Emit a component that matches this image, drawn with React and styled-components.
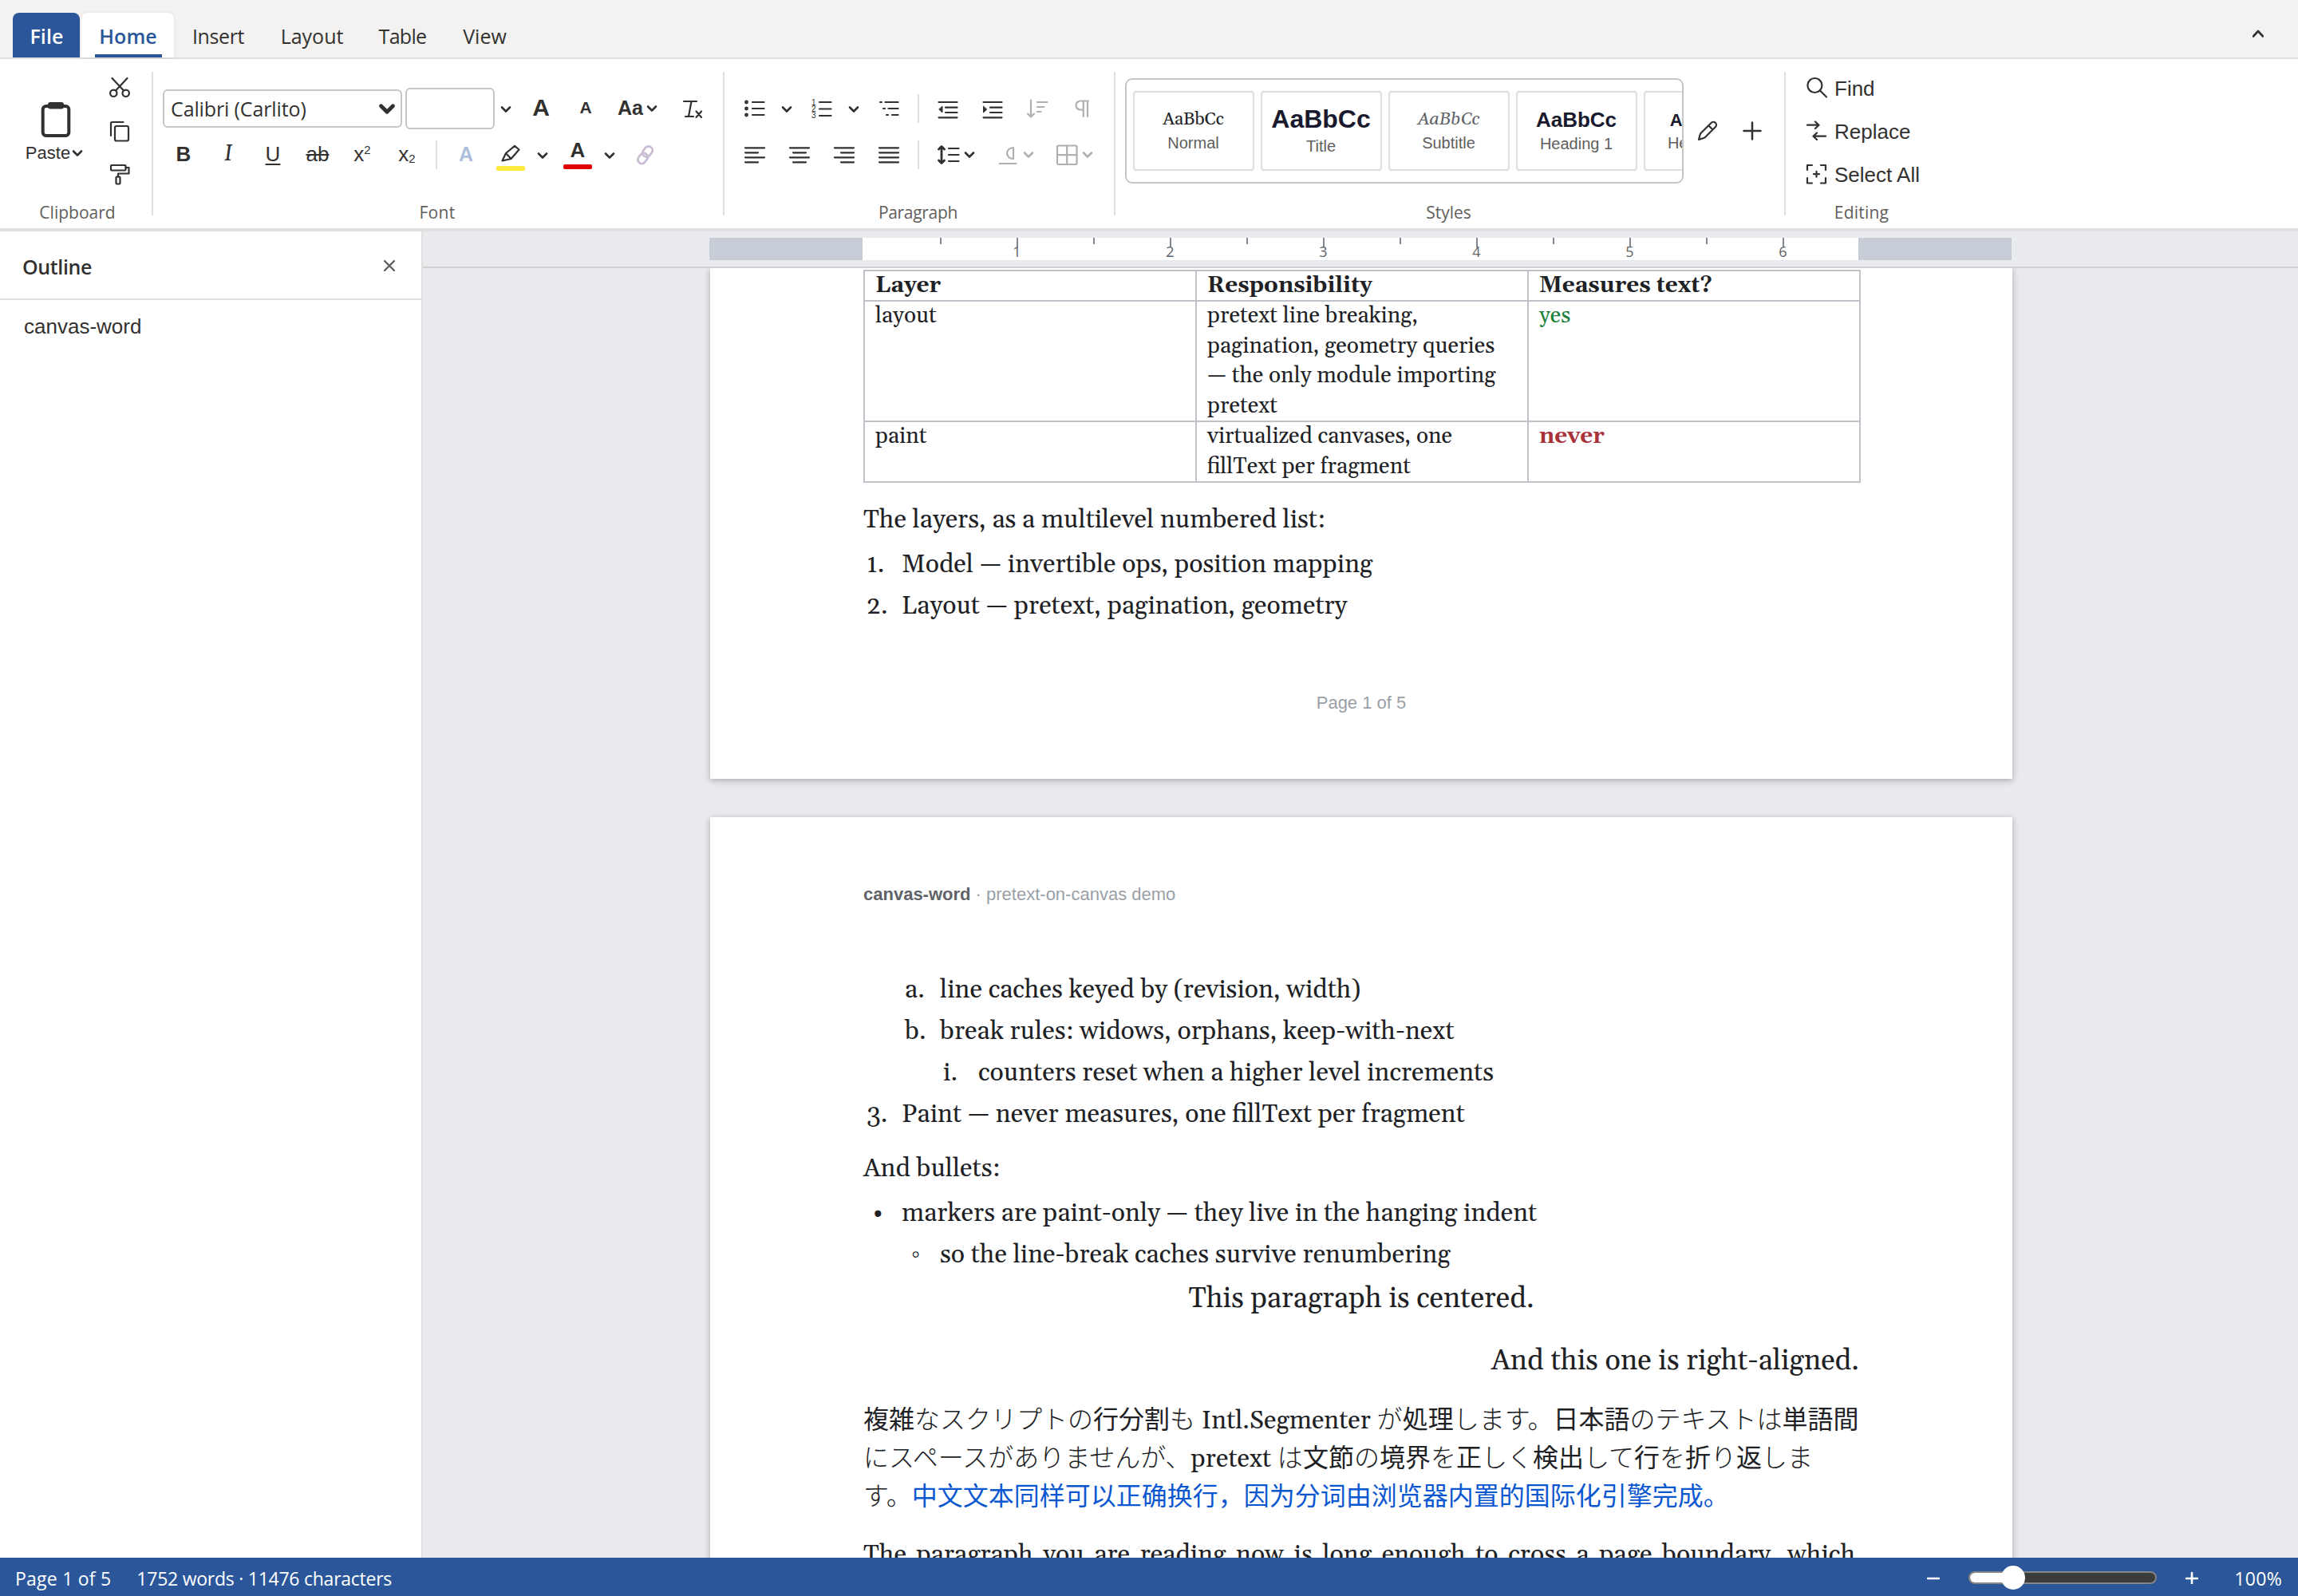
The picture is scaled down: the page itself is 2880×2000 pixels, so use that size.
import React from "react";
import styled, { createGlobalStyle } from "styled-components";

const UI = '"Open Sans", "Noto Sans", sans-serif';
const ARIAL = '"Liberation Sans", Arial, sans-serif';
const DOC = 'Gelasio, "Liberation Serif", "Noto Sans CJK JP", serif';
const INK = "#323130";
const LINE = "#e1dfdd";

const Global = createGlobalStyle`
  *, *::before, *::after { box-sizing: border-box; }
  body { margin: 0; background: #e8eaed; }
`;

const Shell = styled.div`
  display: flex;
  flex-direction: column;
  width: 2880px;
  height: 2000px;
  overflow: hidden;
  font-family: ${UI};
  font-size: 25px;
  color: ${INK};
  background: #e8eaed;
  white-space: nowrap;
`;

/* ---------- tab strip ---------- */
const TabStrip = styled.div`
  display: flex;
  align-items: flex-end;
  gap: 2px;
  height: 74px;
  padding: 0 22px 0 16px;
  background: #f3f2f1;
  border-bottom: 2px solid ${LINE};
`;
const Tab = styled.div`
  display: flex;
  flex-direction: column;
  align-items: center;
  width: ${(p) => p.$w}px;
  height: 56px;
  padding-left: ${(p) => (p.$file || p.$active ? 1 : 0)}px;
  border-radius: 8px 8px 0 0;
  line-height: 58px;
  letter-spacing: ${(p) => p.$ls || 0}px;
  color: ${(p) => (p.$file ? "#fff" : p.$active ? "#2b579a" : INK)};
  font-weight: ${(p) => (p.$file || p.$active ? 600 : 400)};
  background: ${(p) => (p.$file ? "#2b579a" : p.$active ? "#fff" : "transparent")};
  box-shadow: ${(p) => (p.$active ? "0 0 4px rgba(0,0,0,.08)" : "none")};
`;
const TabUnderline = styled.span`
  width: 84px;
  height: 4px;
  margin-top: -6px;
  background: #2b579a;
`;
const Collapse = styled.div`
  display: flex;
  justify-content: center;
  align-items: center;
  width: 56px;
  height: 60px;
  margin-left: auto;
`;

/* ---------- ribbon ---------- */
const Ribbon = styled.div`
  display: flex;
  height: 216px;
  padding-left: 4px;
  background: #fff;
  border-bottom: 4px solid #e0dfde;
`;
const Group = styled.div`
  display: flex;
  flex-direction: column;
  justify-content: space-between;
  width: ${(p) => p.$w}px;
`;
const GroupRule = styled.div`
  width: 2px;
  height: 180px;
  margin-top: 16px;
  background: ${LINE};
`;
const GroupLabel = styled.div`
  height: 35px;
  padding-right: ${(p) => p.$pr || 0}px;
  line-height: 30px;
  font-size: 21px;
  text-align: center;
  color: #605e5c;
  letter-spacing: ${(p) => p.$ls || 0}px;
`;
const ClipBody = styled.div`
  display: flex;
  padding: 9px 0 0 16px;
`;
const PasteButton = styled.div`
  display: flex;
  flex-direction: column;
  align-items: center;
  width: 100px;
  padding-top: 43px;
`;
const PasteText = styled.div`
  display: flex;
  align-items: center;
  gap: 2px;
  height: 30px;
  margin-top: 3px;
  padding-right: 4px;
  font-family: ${ARIAL};
  font-size: 22px;
`;
const SmallColumn = styled.div`
  display: flex;
  flex-direction: column;
  margin-left: 6px;
`;
const SmallButton = styled.div`
  display: flex;
  align-items: center;
  justify-content: center;
  width: 48px;
  height: 54px;
`;
const ToolRows = styled.div`
  display: flex;
  flex-direction: column;
  gap: 8px;
  padding: 34px 0 0 10px;
`;
const ToolRow = styled.div`
  display: flex;
  align-items: center;
  height: ${(p) => p.$h}px;
`;
const Tool = styled.div`
  display: flex;
  align-items: center;
  justify-content: center;
  gap: ${(p) => p.$gap || 0}px;
  width: ${(p) => p.$w || 56}px;
  height: 44px;
`;
const Drop = styled(Tool)`
  width: ${(p) => p.$w || 24}px;
  margin-right: ${(p) => (p.$flush ? 0 : 4)}px;
  padding-top: 1px;
`;
const ToolRule = styled.div`
  width: 2px;
  height: 36px;
  margin: 0 8px;
  background: ${LINE};
`;
const FontSelect = styled.div`
  display: flex;
  align-items: center;
  justify-content: space-between;
  width: 300px;
  height: 48px;
  margin: 0 4px 0 2px;
  padding: 0 6px 0 8px;
  border: 2px solid #c8c6c4;
  border-radius: 6px;
  letter-spacing: -0.12px;
`;
const SizeBox = styled.div`
  width: 112px;
  height: 52px;
  border: 2px solid #c8c6c4;
  border-radius: 6px;
`;
const Glyph = styled.span`
  font-family: ${(p) => (p.$serif ? DOC : ARIAL)};
  font-size: ${(p) => p.$s || 26}px;
  font-weight: ${(p) => p.$wt || 400};
  font-style: ${(p) => (p.$serif ? "italic" : "normal")};
  line-height: 30px;
  text-decoration: ${(p) => p.$deco || "none"};
  text-decoration-thickness: 2px;
  text-underline-offset: 3px;
  color: ${(p) => p.$c || INK};
  padding-bottom: ${(p) => p.$up || 0}px;
`;
const Small = styled.span`
  font-size: 15px;
  line-height: 1;
  vertical-align: ${(p) => (p.$sub ? "-2px" : "9px")};
`;
const SwatchTool = styled.div`
  display: flex;
  flex-direction: column;
  align-items: center;
  width: 56px;
  height: 44px;
  padding-top: ${(p) => p.$top || 0}px;
`;
const Swatch = styled.span`
  width: 36px;
  height: 6px;
  margin-top: ${(p) => p.$mt || 0}px;
  border-radius: 2px;
  background: ${(p) => p.$c};
  flex: none;
`;

/* ---------- style gallery ---------- */
const StylesBody = styled.div`
  display: flex;
  align-items: center;
  padding: 24px 0 0 12px;
`;
const Gallery = styled.div`
  display: flex;
  align-items: center;
  gap: 8px;
  width: 700px;
  height: 132px;
  margin-right: 2px;
  padding-left: 8px;
  border: 2px solid #c8c6c4;
  border-radius: 9px;
  overflow: hidden;
`;
const StyleCard = styled.div`
  display: flex;
  flex: none;
  flex-direction: column;
  align-items: center;
  justify-content: center;
  gap: 4px;
  width: 152px;
  height: 100px;
  padding: ${(p) => p.$down || 0}px 1px ${(p) => p.$up || 0}px 0;
  border: 2px solid ${LINE};
  border-radius: 4px;
`;
const Sample = styled.span`
  font-family: ${(p) => (p.$serif ? DOC : ARIAL)};
  font-size: ${(p) => p.$s}px;
  font-weight: ${(p) => (p.$serif ? 400 : 700)};
  font-style: ${(p) => (p.$italic ? "italic" : "normal")};
  line-height: 1.15;
  color: ${(p) => p.$c};
`;
const CardName = styled.span`
  font-family: ${ARIAL};
  font-size: 20px;
  line-height: 23px;
  color: #605e5c;
`;

const EditBody = styled.div`
  display: flex;
  flex-direction: column;
  padding: 9px 0 0 25px;
`;
const EditItem = styled.div`
  display: flex;
  align-items: center;
  gap: 8px;
  height: 54px;
  font-family: ${ARIAL};
  font-size: 26px;
`;
const EditText = styled.span`
  padding-top: 2px;
`;

/* ---------- workspace ---------- */
const Workspace = styled.div`
  display: flex;
  flex: 1;
  min-height: 0;
`;
const Sidebar = styled.div`
  width: 530px;
  background: #fff;
  border-right: 2px solid ${LINE};
`;
const SideHead = styled.div`
  display: flex;
  align-items: center;
  justify-content: space-between;
  height: 86px;
  padding: 3px 31px 0 28px;
  border-bottom: 2px solid ${LINE};
  font-weight: 600;
  letter-spacing: -0.38px;
`;
const SideItem = styled.div`
  padding: 0 30px;
  line-height: 66px;
  font-family: ${ARIAL};
  font-size: 26px;
`;
const Stage = styled.div`
  display: flex;
  flex-direction: column;
  flex: 1;
  min-width: 0;
`;
const RulerBar = styled.div`
  display: flex;
  flex: none;
  justify-content: center;
  height: 46px;
  padding-top: 8px;
  border-bottom: 2px solid #cfcfd0;
`;
const RulerMargin = styled.div`
  width: 192px;
  height: 28px;
  background: #c6cdd7;
`;
const RulerScale = styled.div`
  display: flex;
  justify-content: center;
  width: 1248px;
  height: 28px;
  padding-left: 3px;
  background: #fff;
`;
const RulerStep = styled.div`
  display: flex;
  flex-direction: column;
  align-items: center;
  width: 96px;
  font-size: 18px;
  line-height: 17px;
  color: #5f6368;
`;
const Tick = styled.span`
  width: 2px;
  height: ${(p) => (p.$long ? 12 : 8)}px;
  margin-bottom: -3px;
  background: #80868b;
`;
const Pages = styled.div`
  display: flex;
  flex: 1;
  flex-direction: column;
  align-items: center;
  gap: 48px;
  min-height: 0;
  padding-left: 2px;
  overflow: hidden;
`;
const Page = styled.div`
  flex: none;
  display: flex;
  flex-direction: column;
  width: 1632px;
  height: ${(p) => p.$h}px;
  padding: ${(p) => p.$top}px 192px 0;
  background: #fff;
  box-shadow: 0 2px 8px rgba(0, 0, 0, 0.28);
  font-family: ${DOC};
  font-size: 32px;
  line-height: 52px;
  color: #202124;
`;
const Grid = styled.div`
  display: grid;
  grid-template-columns: repeat(3, 416px);
  grid-template-rows: 38px 151px 76px;
  width: 1250px;
  border: solid #bfc3c9;
  border-width: 2px 0 0 2px;
`;
const Cell = styled.div`
  padding: 0 12px 0 13px;
  border: solid #bfc3c9;
  border-width: 0 2px 2px 0;
  font-size: 28px;
  line-height: 37.6px;
  font-weight: ${(p) => (p.$bold ? 700 : 400)};
  color: ${(p) => p.$c || "inherit"};
`;
const Para = styled.div`
  height: 52px;
  margin-top: ${(p) => p.$mt || 0}px;
`;
const ListLine = styled.div`
  display: flex;
  height: 52px;
  margin-top: ${(p) => p.$mt || 0}px;
  padding-left: ${(p) => p.$level * 48 + 4}px;
`;
const Marker = styled.span`
  width: 44px;
  padding-left: ${(p) => p.$pad || 0}px;
`;
const Footer = styled.div`
  margin-top: 69px;
  font-family: ${ARIAL};
  font-size: 22px;
  text-align: center;
  color: #9aa0a6;
`;
const Header = styled.div`
  height: 52px;
  font-family: ${ARIAL};
  font-size: 22px;
  color: #9aa0a6;
`;
const HeaderName = styled.b`
  color: #5f6368;
`;
const Display = styled.div`
  margin-top: ${(p) => p.$mt}px;
  text-align: ${(p) => p.$align};
  font-size: 36px;
  line-height: 58px;
`;
const Cjk = styled.div`
  margin-top: 17px;
  line-height: 48px;
  height: 144px;
`;
const CjkLine = styled.div`
  height: 48px;
`;
const Kana = styled.span`
  font-family: "Noto Sans CJK JP", sans-serif;
  font-weight: 300;
`;
const Kanji = styled.span`
  font-family: "Noto Sans CJK JP", sans-serif;
`;
const Chinese = styled.span`
  font-family: "Noto Sans CJK SC", sans-serif;
  color: #0b57d0;
`;
const Justified = styled.div`
  width: 1243px;
  margin-top: 27px;
  text-align-last: justify;
`;

/* ---------- status bar ---------- */
const Status = styled.div`
  display: flex;
  flex: none;
  align-items: center;
  height: 48px;
  padding: 1px 20px 0 19px;
  background: #2b579a;
  color: #fff;
  font-size: 23px;
`;
const StatusText = styled.span`
  margin-right: 32px;
  padding-top: 2px;
  letter-spacing: ${(p) => p.$ls}px;
`;
const Zoom = styled.div`
  display: flex;
  align-items: center;
  margin-left: auto;
`;
const Track = styled.div`
  display: flex;
  align-items: center;
  width: 236px;
  height: 16px;
  margin: 0 36px;
  border: 2px solid #858585;
  border-radius: 8px;
  background: #3b3b3b;
`;
const Fill = styled.span`
  width: 48px;
  height: 12px;
  border-radius: 6px 0 0 6px;
  background: #fff;
`;
const Thumb = styled.span`
  width: 30px;
  height: 30px;
  margin-left: -9px;
  border-radius: 50%;
  background: #fff;
`;
const Percent = styled.span`
  margin-left: 45px;
  padding-top: 2px;
  letter-spacing: 0.35px;
`;

/* ---------- icons ---------- */
const Svg = styled.svg`
  flex: none;
  fill: none;
  stroke: ${(p) => p.$c || INK};
  stroke-width: ${(p) => p.$sw || 2.2};
  stroke-linecap: round;
  stroke-linejoin: round;
`;
const Icon = ({ d, c, sw, size = 28, children }) => (
  <Svg $c={c} $sw={sw} width={size} height={size} viewBox={`0 0 ${size} ${size}`}>
    {d && <path d={d} />}
    {children}
  </Svg>
);
const Chevron = ({ c, up, big }) => (
  <Svg $c={c} $sw={big ? 3.2 : 2.6} width={big ? 22 : 14} height={big ? 15 : 10} viewBox="0 0 14 10">
    <path d={up ? "M1 8.500 7 2l6 6.500" : "M2 2.500 7 7.500l5-5"} />
  </Svg>
);
const GREY = "#b1b0af";

const NumberGlyphs = styled.g`
  font-family: "Liberation Sans", sans-serif;
  font-size: 10px;
  fill: ${INK};
  stroke: none;
`;

const alignIcon = (a, b) => `M2 5.3H26M${a} 11.3H${b}M2 17.3H26M${a} 23.3H${b}`;

const RulerTicks = () =>
  Array.from({ length: 12 }, (_, i) => (
    <RulerStep key={i}>
      <Tick $long={i % 2 === 1} />
      {i % 2 === 1 && (i + 1) / 2}
    </RulerStep>
  ));

const kanjiRun = /([\u4e00-\u9fff]+|[A-Za-z. ]+)/;
const Japanese = ({ children }) =>
  children.split(kanjiRun).map((part, i) => {
    if (/^[A-Za-z. ]+$/.test(part)) return <React.Fragment key={i}>{part}</React.Fragment>;
    if (/^[\u4e00-\u9fff]/.test(part)) return <Kanji key={i}>{part}</Kanji>;
    return <Kana key={i}>{part}</Kana>;
  });

export default function App() {
  return (
    <Shell>
      <Global />
      <TabStrip>
        <Tab $w={84} $file $ls={0.1}>File</Tab>
        <Tab $w={116} $active $ls={0.1}>Home<TabUnderline /></Tab>
        <Tab $w={107} $ls={-0.4}>Insert</Tab>
        <Tab $w={124}>Layout</Tab>
        <Tab $w={99} $ls={-0.7}>Table</Tab>
        <Tab $w={103}>View</Tab>
        <Collapse><Chevron up /></Collapse>
      </TabStrip>

      <Ribbon>
        <Group $w={186}>
          <ClipBody>
            <PasteButton>
              <Icon size={48} sw={4}>
                <rect x="7.7" y="7" width="32.6" height="37" rx="4" />
                <rect x="16" y="4" width="16" height="4.5" rx="1" fill={INK} />
              </Icon>
              <PasteText>Paste<Chevron /></PasteText>
            </PasteButton>
            <SmallColumn>
              <SmallButton>
                <Icon d="M4.500 2 19 17.500M23.500 2 9 17.500">
                  <circle cx="6.3" cy="20.8" r="4.2" />
                  <circle cx="21.7" cy="20.8" r="4.2" />
                </Icon>
              </SmallButton>
              <SmallButton>
                <Icon d="M3 20V4.500Q3 3 4.500 3H18.500"><rect x="8" y="8" width="17" height="18.5" rx="2" /></Icon>
              </SmallButton>
              <SmallButton>
                <Icon d="M21.500 6H25.500V13.500H12V17.500">
                  <rect x="3" y="3" width="18.5" height="6.5" rx="1" />
                  <rect x="9.5" y="17.5" width="5" height="9" rx="1" />
                </Icon>
              </SmallButton>
            </SmallColumn>
          </ClipBody>
          <GroupLabel>Clipboard</GroupLabel>
        </Group>
        <GroupRule />

        <Group $w={714}>
          <ToolRows>
            <ToolRow $h={56}>
              <FontSelect>Calibri (Carlito)<Chevron big /></FontSelect>
              <SizeBox />
              <Drop $w={28} $flush><Chevron /></Drop>
              <Tool $w={60}><Glyph $s={30} $wt={700} $up={2}>A</Glyph></Tool>
              <Tool $w={52}><Glyph $s={21} $wt={700} $up={2}>A</Glyph></Tool>
              <Tool $w={78} $gap={4}><Glyph $wt={700} $s={25} $up={2}>Aa</Glyph><Chevron /></Tool>
              <Tool $w={58}>
                <Icon d="M4 5H20M13.500 5 10 24M6 24H16M19.500 17.500 26 25M26 17.500 19.500 25" />
              </Tool>
            </ToolRow>
            <ToolRow $h={44}>
              <Tool><Glyph $wt={700} $up={2}>B</Glyph></Tool>
              <Tool><Glyph $serif $s={27} $up={3}>I</Glyph></Tool>
              <Tool><Glyph $deco="underline" $up={2}>U</Glyph></Tool>
              <Tool><Glyph $deco="line-through" $up={2}>ab</Glyph></Tool>
              <Tool><Glyph $up={2}>x<Small>2</Small></Glyph></Tool>
              <Tool><Glyph $up={2}>x<Small $sub>2</Small></Glyph></Tool>
              <ToolRule />
              <Tool><Glyph $c="#aebfdb" $wt={700} $s={25} $up={2}>A</Glyph></Tool>
              <SwatchTool $top={8}>
                <Icon d="M8 12 19 2.800 24.500 7.500 14.500 19 3.500 21.500ZM8 12 14.500 19" />
                <Swatch $c="#ffeb3b" />
              </SwatchTool>
              <Drop><Chevron /></Drop>
              <SwatchTool $top={1}>
                <Glyph $wt={700} $up={1}>A</Glyph>
                <Swatch $c="#e00000" $mt={2} />
              </SwatchTool>
              <Drop><Chevron /></Drop>
              <Tool>
                <Icon c="#c9bcd3" sw={2.8}>
                  <rect x="12.5" y="3" width="10" height="14" rx="5" transform="rotate(38 17.500 10)" />
                  <rect x="6.5" y="11.5" width="10" height="14" rx="5" transform="rotate(38 11.500 18.500)" />
                </Icon>
              </Tool>
            </ToolRow>
          </ToolRows>
          <GroupLabel $ls={0.3} $pr={2}>Font</GroupLabel>
        </Group>
        <GroupRule />

        <Group $w={488}>
          <ToolRows>
            <ToolRow $h={56}>
              <Tool>
                <Icon d="M11 6H25.500M11 14H25.500M11 22H25.500">
                  <circle cx="3.5" cy="6" r="1.3" /><circle cx="3.5" cy="14" r="1.3" /><circle cx="3.5" cy="22" r="1.3" />
                </Icon>
              </Tool>
              <Drop><Chevron /></Drop>
              <Tool>
                <Icon d="M11 6H25.500M11 14.500H25.500M11 23H25.500">
                  <NumberGlyphs>
                    <text x="1" y="9.5">1</text><text x="1" y="17.8">2</text><text x="1" y="26.2">3</text>
                  </NumberGlyphs>
                </Icon>
              </Tool>
              <Drop><Chevron /></Drop>
              <Tool><Icon d="M3 6H5M9.500 6H25.500M7 14H9M13.500 14H25.500M11 22H13M18 22H25.500" /></Tool>
              <ToolRule />
              <Tool>
                <Icon d="M2.500 6H25.500M11 12.700H25.500M11 19H25.500M2.500 25.300H25.500"><path d="M7 11.500V19L3 15.200Z" fill={INK} strokeWidth="1" /></Icon>
              </Tool>
              <Tool>
                <Icon d="M2.500 6H25.500M11 12.700H25.500M11 19H25.500M2.500 25.300H25.500"><path d="M2.500 11.500V19L6.500 15.200Z" fill={INK} strokeWidth="1" /></Icon>
              </Tool>
              <Tool><Icon c={GREY} d="M6 3.500V24.500M2 20.500 6 24.500 10 20.500M14 6H26.500M14 12H22.500M14 18H18.500" /></Tool>
              <Tool><Icon c={GREY} d="M22 4.500H12A5.500 5.500 0 0 0 12 15.500H15.800M15.800 4.500V24M21 4.500V24" /></Tool>
            </ToolRow>
            <ToolRow $h={44}>
              <Tool><Icon d={alignIcon(2, 18)} /></Tool>
              <Tool><Icon d={alignIcon(6, 22)} /></Tool>
              <Tool><Icon d={alignIcon(10, 26)} /></Tool>
              <Tool><Icon d={alignIcon(2, 26)} /></Tool>
              <ToolRule />
              <Tool $w={76} $gap={5}>
                <Icon d="M14 6H26.500M14 14H26.500M14 22H26.500"><path d="M5 4V24M1.500 7 5 3.500 8.500 7M1.500 21 5 24.500 8.500 21" strokeWidth="2.8" /></Icon>
                <Chevron />
              </Tool>
              <Tool $w={74} $gap={3}>
                <Icon c={GREY} d="M1.500 25H22.500M19 5V19C8.500 19 8.500 5 19 5Z" />
                <Chevron c={GREY} />
              </Tool>
              <Tool $w={72} $gap={5}>
                <Icon c={GREY}><rect x="2" y="2.5" width="24.5" height="23.5" rx="1.5" /><path d="M14.200 2.500V26M2 14.200H26.500" /></Icon>
                <Chevron c={GREY} />
              </Tool>
            </ToolRow>
          </ToolRows>
          <GroupLabel $ls={-0.3} $pr={3}>Paragraph</GroupLabel>
        </Group>
        <GroupRule />

        <Group $w={838}>
          <StylesBody>
            <Gallery>
              <StyleCard $down={1}><Sample $serif $s={22} $c="#202124">AaBbCc</Sample><CardName>Normal</CardName></StyleCard>
              <StyleCard $up={2}><Sample $s={32} $c="#1a1a2e">AaBbCc</Sample><CardName>Title</CardName></StyleCard>
              <StyleCard $down={1}><Sample $serif $italic $s={22} $c="#5f6368">AaBbCc</Sample><CardName>Subtitle</CardName></StyleCard>
              <StyleCard><Sample $s={26} $c="#1a1a2e">AaBbCc</Sample><CardName>Heading 1</CardName></StyleCard>
              <StyleCard $down={1}><Sample $s={22} $c="#1a1a2e">AaBbCc</Sample><CardName>Heading 2</CardName></StyleCard>
            </Gallery>
            <Tool><Icon d="M3 25 5 17.500 18.500 4A3.600 3.600 0 0 1 24 9L10.500 22.500ZM15.500 7.500 20.500 12.500" /></Tool>
            <Tool><Icon sw={2.5} d="M14 3.500V24.500M3.500 14H24.500" /></Tool>
          </StylesBody>
          <GroupLabel $pr={3}>Styles</GroupLabel>
        </Group>
        <GroupRule />

        <Group $w={190}>
          <EditBody>
            <EditItem><Icon d="M18 17.500 26 25.500"><circle cx="11.4" cy="11" r="9" /></Icon><EditText>Find</EditText></EditItem>
            <EditItem><Icon d="M2 6.700H16.500M12 2.500 16.500 6.700 12 11M25 20.700H9.500M14 16.500 9.500 20.700 14 25" /><EditText>Replace</EditText></EditItem>
            <EditItem><Icon d="M2 9V3H8M19 3H25V9M25 19V25.500H19M8 25.500H2V19M13.500 10.800V17.700M10 14.200H17" /><EditText>Select All</EditText></EditItem>
          </EditBody>
          <GroupLabel $ls={0.2}>Editing</GroupLabel>
        </Group>
      </Ribbon>

      <Workspace>
        <Sidebar>
          <SideHead>
            Outline
            <Svg $c="#605e5c" $sw={2.4} width="18" height="20" viewBox="0 0 18 20"><path d="M3 3 15 15M15 3 3 15" /></Svg>
          </SideHead>
          <SideItem>canvas-word</SideItem>
        </Sidebar>
        <Stage>
          <RulerBar>
            <RulerMargin />
            <RulerScale><RulerTicks /></RulerScale>
            <RulerMargin />
          </RulerBar>
          <Pages>
            <Page $h={640} $top={2}>
              <Grid>
                <Cell $bold>Layer</Cell>
                <Cell $bold>Responsibility</Cell>
                <Cell $bold>Measures text?</Cell>
                <Cell>layout</Cell>
                <Cell>pretext line breaking,<br />pagination, geometry queries<br />— the only module importing<br />pretext</Cell>
                <Cell $c="#188038">yes</Cell>
                <Cell>paint</Cell>
                <Cell>virtualized canvases, one<br />fillText per fragment</Cell>
                <Cell $bold $c="#a8323a">never</Cell>
              </Grid>
              <Para $mt={21}>The layers, as a multilevel numbered list:</Para>
              <ListLine $level={0} $mt={4}><Marker>1.</Marker>Model — invertible ops, position mapping</ListLine>
              <ListLine $level={0}><Marker>2.</Marker>Layout — pretext, pagination, geometry</ListLine>
              <Footer>Page 1 of 5</Footer>
            </Page>
            <Page $h={1100} $top={71}>
              <Header><HeaderName>canvas-word</HeaderName> · pretext-on-canvas demo</Header>
              <ListLine $level={1} $mt={68}><Marker>a.</Marker>line caches keyed by (revision, width)</ListLine>
              <ListLine $level={1}><Marker>b.</Marker>break rules: widows, orphans, keep-with-next</ListLine>
              <ListLine $level={2}><Marker>i.</Marker>counters reset when a higher level increments</ListLine>
              <ListLine $level={0}><Marker>3.</Marker>Paint — never measures, one fillText per fragment</ListLine>
              <Para $mt={16}>And bullets:</Para>
              <ListLine $level={0} $mt={4}><Marker $pad={8}>•</Marker>markers are paint-only — they live in the hanging indent</ListLine>
              <ListLine $level={1}><Marker $pad={8}>◦</Marker>so the line-break caches survive renumbering</ListLine>
              <Display $mt={0} $align="center">This paragraph is centered.</Display>
              <Display $mt={20} $align="right">And this one is right-aligned.</Display>
              <Cjk>
                <CjkLine><Japanese>複雑なスクリプトの行分割も Intl.Segmenter が処理します。日本語のテキストは単語間</Japanese></CjkLine>
                <CjkLine><Japanese>にスペースがありませんが、pretext は文節の境界を正しく検出して行を折り返しま</Japanese></CjkLine>
                <CjkLine><Japanese>す。</Japanese><Chinese lang="zh-CN">中文文本同样可以正确换行，因为分词由浏览器内置的国际化引擎完成。</Chinese></CjkLine>
              </Cjk>
              <Justified>The paragraph you are reading now is long enough to cross a page boundary, which</Justified>
            </Page>
          </Pages>
        </Stage>
      </Workspace>

      <Status>
        <StatusText $ls={0.23}>Page 1 of 5</StatusText>
        <StatusText $ls={-0.25}>1752 words · 11476 characters</StatusText>
        <Zoom>
          <Icon c="#fff" sw={2.6} size={16} d="M1 9H15" />
          <Track><Fill /><Thumb /></Track>
          <Icon c="#fff" sw={2.6} size={16} d="M1 9H15M8 2V16" />
          <Percent>100%</Percent>
        </Zoom>
      </Status>
    </Shell>
  );
}
